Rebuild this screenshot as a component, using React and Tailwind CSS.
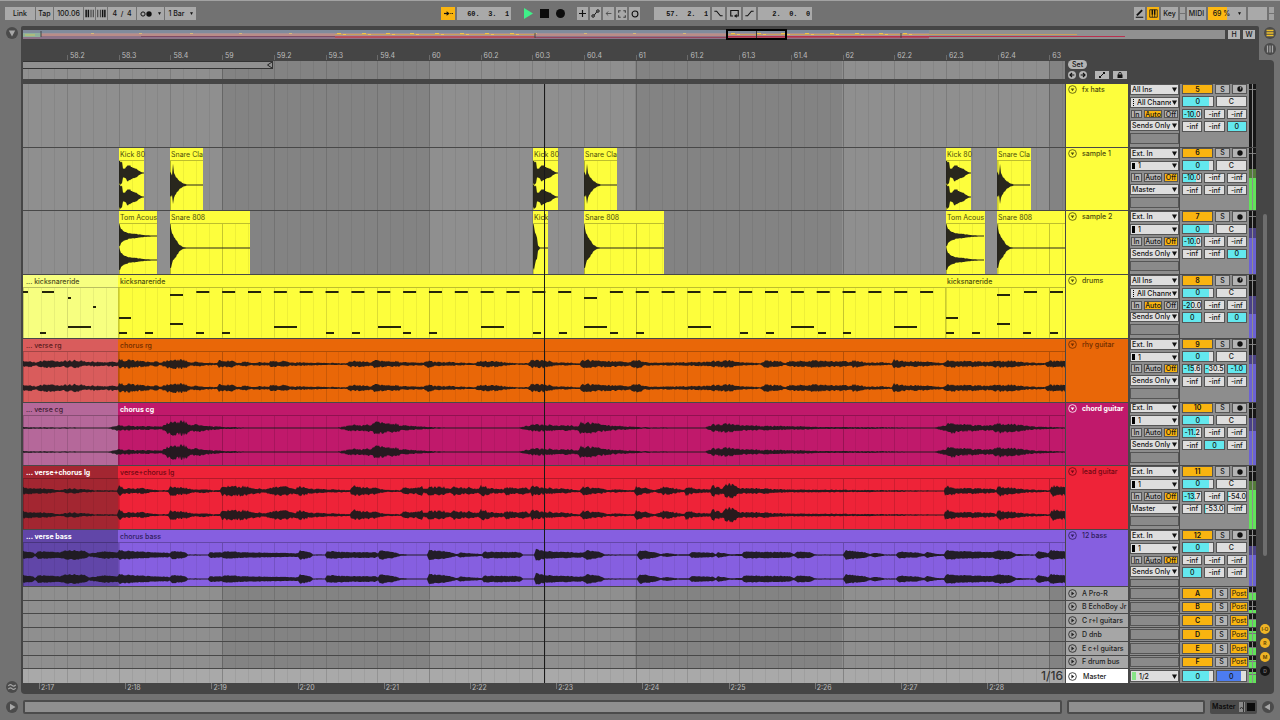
import { useState } from "react";
import clsx from "clsx";

const VIEW_START = 23;
const VIEW_WIDTH = 1042;
const BEAT = 51.7;
const FIRST_BEAT = 67;

const pct = (x) => `${((x - VIEW_START) / VIEW_WIDTH) * 100}%`;
const span = (from, to) => ({ left: pct(from), width: `${((to - from) / VIEW_WIDTH) * 100}%` });

const BEAT_LABELS = [
    "58.2", "58.3", "58.4", "59", "59.2", "59.3", "59.4", "60", "60.2", "60.3",
    "60.4", "61", "61.2", "61.3", "61.4", "62", "62.2", "62.3", "62.4", "63",
];
const TIME_LABELS = ["2:17", "2:18", "2:19", "2:20", "2:21", "2:22", "2:23", "2:24", "2:25", "2:26", "2:27", "2:28"];

// envelopes are [x, amplitude] pairs
const RHY = [23,3,30,3.5,36,2,42,4,55,4,62,3,70,4,78,4,88,2,95,3,105,2,112,3,118,2,119,5,135,4,145,3,150,2,157,3.5,160,1.5,166,4,173,5.5,185,4.5,190,2,198,2.5,208,1.5,217,1,219,4,233,3.5,236,1.5,240,1.5,245,3,252,1.5,260,2,269,1.5,271,4,280,2,283,3.5,290,2,300,2,325,1.2,347,1,350,3.5,363,3,370,2,375,4,398,3,402,2,424,1.5,427,4,435,2.5,452,2,460,1.5,475,1,479,3,495,3.5,503,2,515,1,528,1,531,4,543,4.5,555,2,580,1,582,5,600,3.5,622,3,630,2,633,4,640,4.5,645,2,660,1.5,690,2,705,2.5,715,3.5,730,4,738,2,760,1,765,4,780,3,785,1,790,3.5,808,3,813,4.5,835,3,840,3.5,850,2.5,854,4.5,862,3,866,1.5,880,2,892,1,893,5,905,3,920,3,943,1.2,946,4,960,3.5,990,2.5,996,4,1010,3.5,1025,2,1045,1,1048,3.5,1065,4];
const CHORD = [23,1,85,0.6,108,0.5,112,1.5,118,3,119,3,135,2,162,2,166,5,172,9,178,7,184,8,190,4,200,4,212,2,225,1.2,245,0.6,337,0.5,345,2,352,4,360,3,370,4,378,7,386,6,395,5,402,3,415,2,430,1,450,0.6,518,0.5,525,2,535,4,548,3.5,560,3,578,2.5,581,7,585,6,592,6,602,4,610,3,625,2,640,1,670,0.6,705,0.5,712,4,727,5,740,3,760,2.5,795,2,820,1.2,880,1,910,0.6,935,0.5,945,3.5,950,6,965,4,980,3,993,3,997,6,1003,5,1015,4,1025,3,1035,1.5,1065,0.8];
const LEAD = [23,4,40,3,50,2.5,60,1,70,3,82,2,95,1,117,0.8,119,6,125,3,135,2.5,142,3.5,148,2,160,1,168,1,170,6,180,4,187,3.5,195,1.5,205,2.5,212,1,220,1,222,6,235,5,242,5.5,248,5,256,3,265,2,273,4.5,285,5,296,3,299,6,310,3,325,2,340,1.5,350,1,352,6,365,4,372,4,385,1.5,400,1,403,3.5,413,3,422,5,424,2,429,4.5,443,5,450,2,455,5.5,463,3,468,4.5,478,2,481,6,490,3.5,503,2,507,5,515,3,523,4.5,530,2,532,5.5,545,3.5,560,3,580,1,583,5.5,592,3.5,602,3,608,1,615,2,630,1,634,1,636,5,648,3,655,1,663,4.5,675,3,684,1,686,5,695,2.5,710,2,712,6,718,5,722,3,727,8,735,7,738,3,755,3,765,3,775,2,800,1.5,830,1.5,860,1.2,890,1,940,0.6,944,0.6,945,6,955,3.5,975,3,993,2.5,996,1,998,6,1010,3.5,1025,2,1045,1,1050,1,1052,6,1065,5];
const BASS = [23,4,33,3,35,1,38,4,60,3,63,4,70,5,85,4,89,1.5,95,2.5,105,4,115,3,118,3,119,5,130,4,150,3,167,2.5,170,2,172,4.5,185,3,188,0.7,208,0.6,210,3,222,2.5,224,4,240,3,290,2,298,2,300,5,310,3,313,0.7,325,0.6,327,4,350,3,375,3,378,1.5,380,5,392,3.5,400,1,408,0.6,427,0.6,429,5,445,4,457,1,460,2.5,475,1.5,482,1,484,3.5,520,3,523,0.6,534,0.6,536,6,545,4,570,3,583,2.5,587,5,600,3,605,0.7,637,0.6,640,5,655,3,661,1,666,2,677,0.8,689,0.8,692,3,712,2.5,716,1,718,3,730,0.8,742,1,744,3.5,790,3,794,1,797,3.5,810,3,815,0.7,843,0.6,846,5,865,3,870,1,875,2.5,885,0.7,896,0.7,899,3.5,918,2.5,924,1,927,3,938,1,944,1,946,5,960,4,993,3,998,5,1010,4,1016,1,1035,0.6,1038,4,1048,2,1051,5,1065,4];

const at = (x, env) => env.map((v, i) => (i % 2 ? v : v + x));
const kick = (x) => at(x, [0, 12, 3, 12, 4, 5, 6, 5, 9, 9, 14, 6, 18, 4, 22, 1, 25, 0.4]);
const clap = (x) => at(x, [0, 13, 2, 11, 3, 22, 4, 14, 6, 9, 9, 5, 13, 2, 17, 0.5, 33, 0.4]);
const tom = (x) => at(x, [0, 12, 2, 8, 5, 5, 10, 3, 15, 2.5, 25, 1, 38, 0.4]);
const snare = (x, length) => at(x, [0, 24, 1, 20, 3, 14, 5, 11, 9, 4, 13, 1, 18, 0.4, length, 0.4]);

const STEREO = [25, 49];
const MONO = [37];

const YELLOW = "bg-[#fdfe3c] text-[#4c4c0c]";

const hit = (label, from, to) => ({ from, to, label, tone: YELLOW, small: true });

const TRACKS = [
    {
        name: "fx hats", number: "5", tone: YELLOW, input: "All Ins", channel: "All Channe", monitor: "Auto",
        output: "Sends Only", sends: ["-10.0", "-inf", "-inf", "-inf", "-inf", "0"], midi: true, clips: [], waves: [],
        meter: { level: 0, dim: 0 },
    },
    {
        name: "sample 1", number: "6", tone: YELLOW, input: "Ext. In", channel: "1", monitor: "Off",
        output: "Master", sends: ["-10.0", "-inf", "-inf", "-inf", "-inf", "-inf"],
        clips: [hit("Kick 80", 119, 144), hit("Snare Cla", 170, 203), hit("Kick 80", 533, 558), hit("Snare Cla", 584, 617), hit("Kick 80", 946, 971), hit("Snare Cla", 997, 1031)],
        waves: [119, 533, 946].map((x) => ({ env: kick(x), rows: STEREO })).concat([170, 584, 997].map((x) => ({ env: clap(x), rows: MONO }))),
        meter: { level: 52, dim: 66, green: true },
    },
    {
        name: "sample 2", number: "7", tone: YELLOW, input: "Ext. In", channel: "1", monitor: "Off",
        output: "Sends Only", sends: ["-10.0", "-inf", "-inf", "-inf", "-inf", "0"],
        clips: [hit("Tom Acous", 119, 157), hit("Snare 808", 170, 250), hit("Kick", 533, 548), hit("Snare 808", 584, 664), hit("Tom Acous", 946, 985), hit("Snare 808", 997, 1065)],
        waves: [
            { env: tom(119), rows: STEREO }, { env: tom(946), rows: STEREO },
            { env: at(533, [0, 24, 1, 22, 3, 14, 4, 12, 5, 3, 7, 0.5, 15, 0.4]), rows: MONO },
            { env: snare(170, 80), rows: MONO }, { env: snare(584, 80), rows: MONO }, { env: snare(997, 68), rows: MONO },
        ],
        meter: { level: 57, dim: 74 },
    },
    {
        name: "drums", number: "8", tone: YELLOW, input: "All Ins", channel: "All Channe", monitor: "Auto",
        output: "Sends Only", sends: ["-20.0", "-inf", "-inf", "0", "-inf", "0"], midi: true, notes: true, waves: [],
        clips: [
            { from: 23, to: 118, label: "... kicksnareride", tone: "bg-[#f7ff80] text-[#4c4c20]", cut: true },
            { from: 118, to: 945, label: "kicksnareride", tone: YELLOW },
            { from: 945, to: 1065, label: "kicksnareride", tone: YELLOW },
        ],
        meter: { level: 38, dim: 66 },
    },
    {
        name: "rhy guitar", number: "9", tone: "bg-[#e96708] text-[#6e2c00]", input: "Ext. In", channel: "1", monitor: "Off",
        output: "Sends Only", sends: ["-15.6", "-30.5", "-1.0", "-inf", "-inf", "-inf"], waves: [{ env: RHY, rows: STEREO, rough: true }],
        clips: [
            { from: 23, to: 118, label: "... verse rg", tone: "bg-[#d95c5c] text-[#5c1c1c]", cut: true },
            { from: 118, to: 1065, label: "chorus rg", tone: "bg-[#e96708] text-[#6e2c00]" },
        ],
        meter: { level: 60, dim: 74 },
    },
    {
        name: "chord guitar", number: "10", tone: "bg-[#c0196b] text-white", strong: true, input: "Ext. In", channel: "1", monitor: "Off",
        output: "Sends Only", sends: ["-11.2", "-inf", "-inf", "-inf", "0", "-inf"], waves: [{ env: CHORD, rows: STEREO, rough: true }],
        clips: [
            { from: 23, to: 118, label: "... verse cg", tone: "bg-[#b5689a] text-[#3c1c30]", cut: true },
            { from: 118, to: 1065, label: "chorus cg", tone: "bg-[#c0196b] text-white", strong: true },
        ],
        meter: { level: 55, dim: 76 },
    },
    {
        name: "lead guitar", number: "11", tone: "bg-[#ee2338] text-[#6e0812]", input: "Ext. In", channel: "1", monitor: "Off",
        output: "Master", sends: ["-13.7", "-inf", "-54.0", "-inf", "-53.0", "-inf"], waves: [{ env: LEAD, rows: STEREO, rough: true }],
        clips: [
            { from: 23, to: 118, label: "... verse+chorus lg", tone: "bg-[#a32631] text-white", cut: true, strong: true },
            { from: 118, to: 1065, label: "verse+chorus lg", tone: "bg-[#ee2338] text-[#6e0812]" },
        ],
        meter: { level: 62, dim: 76, green: true },
    },
    {
        name: "12 bass", number: "12", tone: "bg-[#865fe0] text-[#2e1c5c]", input: "Ext. In", channel: "1", monitor: "Off",
        output: "Sends Only", sends: ["-inf", "-inf", "-inf", "0", "-inf", "-inf"], waves: [{ env: BASS, rows: STEREO }],
        clips: [
            { from: 23, to: 118, label: "... verse bass", tone: "bg-[#6146a8] text-white", cut: true, strong: true },
            { from: 118, to: 1065, label: "chorus bass", tone: "bg-[#865fe0] text-[#2e1c5c]" },
        ],
        meter: { level: 55, dim: 72 },
    },
];

const RETURNS = [
    { id: "A", name: "A Pro-R", level: 60 },
    { id: "B", name: "B EchoBoy Jr", level: 25 },
    { id: "C", name: "C r+l guitars", level: 65 },
    { id: "D", name: "D dnb", level: 80 },
    { id: "E", name: "E c+l guitars", level: 60 },
    { id: "F", name: "F drum bus", level: 65 },
];

// drum notes: [x, y, width]
const hats = [];
for (let i = 0; i < 29; i++) {
    if (i !== 15) hats.push([196.3 + (i * BEAT) / 2, 16, 13]);
}
const NOTES = [
    ...hats, [23, 16, 5], [42, 16, 12], [68, 22, 3], [93, 31, 3],
    [1024, 16, 13], [1050, 16, 13], [170, 19, 13], [584, 22, 13], [997, 19, 13],
    [119, 42, 12], [946, 42, 12], [170, 48, 13], [997, 48, 13],
    ...[68, 274, 378, 481, 584, 688, 791, 894].map((x) => [x, 51, 23]),
    ...[119, 145, 196, 222, 326, 352, 403, 429, 533, 559, 610, 636, 740, 766, 818, 843, 946, 972, 1023, 1050].map((x) => [x, 57, 8]),
    [40, 57, 6],
];

function wavePath(env, center, rough) {
    let seed = 7;
    const random = () => {
        seed = (seed * 16807) % 2147483647;
        return seed / 2147483647;
    };
    const top = [];
    const bottom = [];
    const wobble = rough ? 0.5 : 0.25;
    let i = 0;
    for (let x = env[0]; x <= env[env.length - 2]; x++) {
        while (i + 4 < env.length && env[i + 2] < x) i += 2;
        const t = Math.min(1, (x - env[i]) / (env[i + 2] - env[i]));
        const amp = env[i + 1] + (env[i + 3] - env[i + 1]) * t;
        const up = Math.max(0.5, amp * (1.05 - wobble * random()));
        const down = Math.max(0.5, amp * (1.05 - wobble * random()));
        top.push(`${x - VIEW_START} ${(center - up).toFixed(1)}`);
        bottom.unshift(`${x - VIEW_START} ${(center + down).toFixed(1)}`);
    }
    return `M${top.join("L")}L${bottom.join("L")}Z`;
}

function GridLines() {
    const lines = [];
    for (let i = -3; i <= 80; i++) {
        const x = Math.round(FIRST_BEAT + (i * BEAT) / 4 - VIEW_START);
        if (x < 0 || x >= VIEW_WIDTH) continue;
        const beat = i % 4 === 0;
        const bar = (i - 12) % 16 === 0;
        lines.push(<rect key={i} x={x} width="1" height="10" fill="#000" opacity={bar ? 0.22 : beat ? 0.13 : 0.06} />);
    }
    return (
        <svg className="absolute inset-0 h-full w-full" viewBox="0 0 1042 10" preserveAspectRatio="none" aria-hidden="true">
            {lines}
        </svg>
    );
}

function BarShades() {
    return (
        <>
            <div className="absolute inset-y-0 bg-black/8" style={span(222, 429)} />
            <div className="absolute inset-y-0 bg-black/8" style={span(635, 842)} />
            <div className="absolute inset-y-0 bg-black/8" style={span(1049, 1065)} />
        </>
    );
}

function Clip({ clip }) {
    return (
        <div className={clsx("absolute inset-y-0", clip.tone)} style={span(clip.from, clip.to)}>
            <div className="h-full border-l border-black/20" />
        </div>
    );
}

function ClipHeader({ clip }) {
    return (
        <div
            className={clsx(
                "absolute top-0 h-[13px] border-b border-b-black/25 whitespace-nowrap leading-[13px]",
                clip.tone,
                clip.cut ? "pl-[3px]" : clip.small ? "pl-px" : "pl-[2px]",
                clip.strong ? "font-bold" : clip.small ? "font-normal" : "font-medium"
            )}
            style={span(clip.from, clip.to)}
        >
            {clip.label}
        </div>
    );
}

function Lane({ track }) {
    return (
        <div className="relative min-w-0 flex-1 overflow-hidden bg-[#8f8f8f]">
            <BarShades />
            {track.clips.map((clip) => <Clip key={clip.from} clip={clip} />)}
            <GridLines />
            <svg className="absolute inset-x-0 top-0 h-[63px] w-full" viewBox="0 0 1042 63" preserveAspectRatio="none" aria-hidden="true">
                {track.waves.map((wave) =>
                    wave.rows.map((row) => (
                        <path key={`${wave.env[0]}-${row}`} d={wavePath(wave.env, row, wave.rough)} fill="#1c1a1c" fillOpacity="0.94" />
                    ))
                )}
                {track.notes && NOTES.map(([x, y, w]) => <rect key={`${x}-${y}`} x={x - VIEW_START} y={y} width={w} height="2" fill="#25250a" />)}
            </svg>
            {track.clips.map((clip) => <ClipHeader key={clip.from} clip={clip} />)}
        </div>
    );
}

function Fold({ open }) {
    return (
        <svg viewBox="0 0 10 10" className="h-[9px] w-[9px] shrink-0" aria-hidden="true">
            <circle cx="5" cy="5" r="4.3" fill="none" stroke="currentColor" strokeWidth="0.9" />
            {open ? <path d="M3 3.8h4L5 7z" fill="currentColor" /> : <path d="M3.8 2.8v4.4L7 5z" fill="currentColor" />}
        </svg>
    );
}

function Picker({ label, value, icon }) {
    return (
        <div className="relative flex min-h-0 min-w-0 flex-1 basis-0 border border-[#555] bg-[#dedede]">
            {icon === "mono" && <span className="my-px ml-px w-[3px] shrink-0 bg-black" />}
            {icon === "midi" && <span className="my-px ml-[2px] w-px shrink-0 border-l border-dotted border-black" />}
            {icon === "stereo" && <span className="my-px ml-px w-[4px] shrink-0 bg-[#86e486]" />}
            <select
                aria-label={label}
                defaultValue={value}
                className={clsx("h-full min-h-0 w-full min-w-0 appearance-none bg-transparent leading-none font-medium outline-none", icon ? "pl-[3px]" : "pl-px")}
            >
                <option>{value}</option>
            </select>
            <span className="pointer-events-none absolute inset-y-0 right-0 flex w-[7px] items-center justify-center bg-[#dedede]">
                <svg viewBox="0 0 6 6" className="h-[5px] w-[5px]" aria-hidden="true">
                    <path d="M0 0.5h6L3 6z" fill="#111" />
                </svg>
            </span>
        </div>
    );
}

function fillFor(value) {
    const db = parseFloat(value);
    if (Number.isNaN(db)) return 0;
    if (db === 0) return 100;
    return Math.max(6, 100 + db * 2.6);
}

function Value({ label, value, fill, color = "#63e8ee" }) {
    const background = `linear-gradient(to right, ${color} ${fill}%, #dedede ${fill}%)`;
    return (
        <input
            aria-label={label}
            defaultValue={value}
            className="w-0 min-w-0 flex-1 border border-[#555] text-center leading-none font-medium outline-none"
            style={{ background }}
        />
    );
}

function Toggle({ on, className, children, ...rest }) {
    return (
        <button
            className={clsx("flex min-h-0 items-center justify-center overflow-hidden border border-[#555] leading-none", on ? "bg-[#f9b410]" : "bg-[#b4b4b4]", className)}
            aria-pressed={!!on}
            {...rest}
        >
            {children}
        </button>
    );
}

function Meter({ level, dim, green }) {
    return (
        <div className="flex w-[8px] shrink-0 justify-center gap-px bg-[#8d8d8d]">
            {[0, 1].map((i) => (
                <div key={i} className="relative w-[3px] bg-[#161616]">
                    <div className={clsx("absolute inset-x-0 bottom-0", green ? "bg-[#547c3a]" : "bg-[#4b4287]")} style={{ height: `${dim}%` }} />
                    <div className={clsx("absolute inset-x-0 bottom-0", green ? "bg-[#62e35a]" : "bg-[#6c62d4]")} style={{ height: `${level}%` }} />
                    <div className="absolute inset-x-0 top-[5px] h-px bg-[#777]" />
                </div>
            ))}
        </div>
    );
}

function Track({ track, short }) {
    const [monitor, setMonitor] = useState(track.monitor);
    const [active, setActive] = useState(true);

    return (
        <div className={clsx("flex min-h-0 basis-0 overflow-hidden border-b border-[#484848]", short ? "grow-57" : "grow-64")}>
            <Lane track={track} />
            <div className="flex w-[191px] shrink-0 bg-[#484848] pl-px">
                <div className={clsx("flex w-[62px] shrink-0 items-start gap-[5px] pl-[2px]", track.tone)}>
                    <button aria-label={`Fold ${track.name}`} className="mt-px"><Fold open /></button>
                    <span className={clsx("whitespace-nowrap leading-[11px]", track.strong ? "font-bold" : "font-medium")}>{track.name}</span>
                </div>
                <div className="ml-[2px] flex w-[49px] shrink-0 flex-col bg-[#8d8d8d]">
                    <div className="flex h-[61px] shrink-0 flex-col gap-[2px] pb-px">
                        <Picker label={`${track.name} input type`} value={track.input} />
                        <Picker label={`${track.name} input channel`} value={track.channel} icon={track.midi ? "midi" : "mono"} />
                        <div className="flex min-h-0 flex-1 gap-[2px] px-px font-medium">
                            {["In", "Auto", "Off"].map((mode) => (
                                <Toggle key={mode} on={monitor === mode} onClick={() => setMonitor(mode)} className={mode === "Auto" ? "w-[18px]" : mode === "In" ? "w-[11px]" : "w-[14px]"}>
                                    {mode}
                                </Toggle>
                            ))}
                        </div>
                        <Picker label={`${track.name} output`} value={track.output} />
                        <div className="min-h-0 flex-1 border border-[#555] bg-[#8a8a8a]" />
                    </div>
                </div>
                <div className="ml-px w-[68px] shrink-0 bg-[#8d8d8d] pl-[2px]">
                    <div className="flex h-[61px] flex-col gap-[2px] pb-px">
                        <div className="flex min-h-0 flex-1 gap-[2px]">
                            <Toggle on={active} onClick={() => setActive(!active)} className="w-[31px] font-semibold">{track.number}</Toggle>
                            <Toggle className="w-[15px] font-medium">S</Toggle>
                            <Toggle className="w-[15px]" aria-label={`Arm ${track.name}`}>
                                <svg viewBox="0 0 8 8" className="h-[6px] w-[6px]" aria-hidden="true">
                                    <circle cx="4" cy="4" r="3.6" fill="#111" />
                                    {track.midi && <path d="M4.6 1.4v3.4M4.6 1.6l1.6 1" stroke="#ccc" strokeWidth="0.9" fill="none" />}
                                </svg>
                            </Toggle>
                        </div>
                        <div className="flex min-h-0 flex-1 gap-[2px] pr-px">
                            <Value label={`${track.name} volume`} value="0" fill={85} />
                            <Value label={`${track.name} pan`} value="C" fill={0} />
                        </div>
                        {[0, 3].map((row) => (
                            <div key={row} className="flex min-h-0 flex-1 gap-[2px] pr-px">
                                {track.sends.slice(row, row + 3).map((send, i) => (
                                    <Value key={i} label={`${track.name} send ${row + i + 1}`} value={send} fill={fillFor(send)} />
                                ))}
                            </div>
                        ))}
                        <div className="min-h-0 flex-1" />
                    </div>
                </div>
                <Meter {...track.meter} />
            </div>
        </div>
    );
}

function ReturnTrack({ item }) {
    return (
        <div className="flex min-h-0 grow-13 basis-0 border-b border-[#484848]">
            <div className="relative min-w-0 flex-1 bg-[#8f8f8f]">
                <BarShades />
                <GridLines />
            </div>
            <div className="flex w-[191px] shrink-0 bg-[#484848] pl-px">
                <div className="flex w-[62px] shrink-0 items-center gap-[5px] bg-[#a6a6a6] pl-[2px] text-[#222]">
                    <button aria-label={`Unfold ${item.name}`}><Fold /></button>
                    <span className="whitespace-nowrap font-medium leading-none">{item.name}</span>
                </div>
                <div className="ml-[2px] flex w-[49px] shrink-0 bg-[#8d8d8d] py-px">
                    <div className="flex-1 border border-[#555] bg-[#8a8a8a]" />
                </div>
                <div className="ml-px flex w-[68px] shrink-0 gap-[2px] bg-[#8d8d8d] py-px pl-[2px]">
                    <Toggle on className="w-[31px] font-semibold">{item.id}</Toggle>
                    <Toggle className="w-[13px] font-medium">S</Toggle>
                    <Toggle on className="w-[18px]">Post</Toggle>
                </div>
                <Meter level={item.level} dim={item.level} green />
            </div>
        </div>
    );
}

function MasterTrack() {
    return (
        <div className="flex min-h-0 grow-14 basis-0">
            <div className="relative min-w-0 flex-1 bg-[#a9a9a9]">
                <GridLines />
                <span className="absolute right-[2px] bottom-0 text-[12px] leading-[14px] font-medium text-[#333]">1/16</span>
            </div>
            <div className="flex w-[191px] shrink-0 bg-[#484848] pl-px">
                <div className="flex w-[62px] shrink-0 items-center gap-[6px] bg-white pl-[2px] text-[#222]">
                    <button aria-label="Unfold Master"><Fold /></button>
                    <span className="font-medium leading-none">Master</span>
                </div>
                <div className="ml-[2px] flex w-[49px] shrink-0 bg-[#8d8d8d] py-px">
                    <Picker label="Master output" value="1/2" icon="stereo" />
                </div>
                <div className="ml-px flex w-[68px] shrink-0 gap-[2px] bg-[#8d8d8d] py-px pr-px pl-[2px]">
                    <Value label="Master volume" value="0" fill={85} />
                    <Value label="Cue volume" value="0" fill={82} color="#4c7cf0" />
                </div>
                <Meter level={78} dim={78} green />
            </div>
        </div>
    );
}

function BarButton({ className, tone = "bg-[#a9a9a9]", children, ...rest }) {
    return (
        <button className={clsx("flex h-[13px] shrink-0 items-center justify-center leading-none", tone, className)} {...rest}>
            {children}
        </button>
    );
}

function Glyph({ children, className = "h-[9px] w-[9px]" }) {
    return (
        <svg viewBox="0 0 12 12" className={className} fill="none" stroke="#111" strokeWidth="1.3" aria-hidden="true">
            {children}
        </svg>
    );
}

function Position({ label, value, className }) {
    return (
        <input
            aria-label={label}
            defaultValue={value}
            className={clsx("h-[13px] shrink-0 bg-[#a9a9a9] pr-[2px] text-right font-['Liberation_Mono',monospace] text-[7px] font-bold outline-none", className)}
        />
    );
}

function Caret() {
    return (
        <svg viewBox="0 0 6 6" className="h-[3px] w-[3px]" aria-hidden="true">
            <path d="M0 0.5h6L3 6z" fill="#111" />
        </svg>
    );
}

function MapLights() {
    return (
        <span className="flex w-[5px] flex-col gap-px">
            <i className="flex-1 bg-[#a2a2a2]" />
            <i className="flex-1 bg-[#a2a2a2]" />
        </span>
    );
}

function ControlBar() {
    const [playing, setPlaying] = useState(true);

    return (
        <header className="grid h-[26px] shrink-0 grid-cols-[17fr_auto_18fr] items-center border-t border-[#a2a2a2] pr-[6px] pl-[5px] font-medium">
            <div className="flex gap-px">
                <BarButton className="w-[30px]">Link</BarButton>
                <BarButton className="w-[17px]">Tap</BarButton>
                <input aria-label="Tempo" defaultValue="100.06" className="h-[13px] w-[29px] bg-[#a9a9a9] text-center outline-none" />
                <BarButton className="w-[11px]" aria-label="Nudge down">
                    <Glyph><path d="M1.5 1v10M4.5 1v10" strokeWidth="2" /><path d="M8 1v10M11 1v10" strokeWidth="1" /></Glyph>
                </BarButton>
                <BarButton className="w-[11px]" aria-label="Nudge up">
                    <Glyph><path d="M1 1v10M4.5 1v10" strokeWidth="1" /><path d="M7.500 1v10M10.500 1v10" strokeWidth="2" /></Glyph>
                </BarButton>
                <input aria-label="Time signature" defaultValue="4  /  4" className="h-[13px] w-[28px] bg-[#a9a9a9] text-center outline-none" />
                <BarButton className="w-[27px] gap-[6px]" aria-label="Metronome">
                    <svg viewBox="0 0 12 6" className="h-[6px] w-[12px]" aria-hidden="true">
                        <circle cx="3" cy="3" r="2.1" fill="none" stroke="#111" />
                        <circle cx="9" cy="3" r="2.7" fill="#111" />
                    </svg>
                    <Caret />
                </BarButton>
                <BarButton className="w-[31px] gap-[5px]">1 Bar <Caret /></BarButton>
            </div>

            <div className="flex items-center">
                <BarButton className="w-[14px]" tone="bg-[#f9b410]" aria-label="Follow">
                    <Glyph><path d="M0 6h6" strokeWidth="1.6" /><path d="M3.5 3l4 3-4 3z" fill="#111" stroke="none" /><path d="M8.5 6h1.4M10.8 6H12" /></Glyph>
                </BarButton>
                <Position label="Arrangement position" value="60.  3.  1" className="ml-[2px] w-[54px]" />
                <button aria-label="Play" aria-pressed={playing} onClick={() => setPlaying(!playing)} className="ml-[13px]">
                    <svg viewBox="0 0 9 11" className="h-[11px] w-[9px]" aria-hidden="true"><path d="M0 0l9 5.5L0 11z" fill="#3ff088" /></svg>
                </button>
                <button aria-label="Stop" onClick={() => setPlaying(false)} className="ml-[7px] h-[9px] w-[9px] bg-[#0c0c0c]" />
                <button aria-label="Record" className="ml-[7px] h-[9px] w-[9px] rounded-full bg-[#0c0c0c]" />
                <div className="ml-[12px] flex gap-[2px]">
                    <BarButton className="w-[11px]" aria-label="Overdub"><Glyph className="h-[7px] w-[7px]"><path d="M6 0v12M0 6h12" strokeWidth="2" /></Glyph></BarButton>
                    <BarButton className="w-[11px]" aria-label="Automation arm"><Glyph><path d="M4 8.5l4-5" /><circle cx="2.8" cy="9.3" r="1.7" /><circle cx="9.2" cy="2.7" r="1.7" /></Glyph></BarButton>
                    <BarButton className="w-[11px]" aria-label="Re-enable automation"><Glyph className="h-[7px] w-[7px] opacity-60"><path d="M11 6H2M5.5 2.5L2 6l3.5 3.5" strokeWidth="1.6" /></Glyph></BarButton>
                    <BarButton className="w-[11px]" aria-label="Capture"><Glyph className="h-[8px] w-[8px] opacity-70"><path d="M1 4V1h3M8 1h3v3M11 8v3H8M4 11H1V8" strokeWidth="1.6" /></Glyph></BarButton>
                    <BarButton className="w-[11px]" aria-label="Session record"><Glyph className="h-[8px] w-[8px]"><circle cx="6" cy="6" r="4.4" strokeWidth="1.6" /></Glyph></BarButton>
                </div>
                <Position label="Loop start" value="57.  2.  1" className="ml-[14px] w-[56px]" />
                <div className="ml-[2px] flex gap-[2px]">
                    <BarButton className="w-[13px]" aria-label="Punch in"><Glyph><path d="M0.5 3h3l5 6h3" strokeWidth="1.5" /></Glyph></BarButton>
                    <BarButton className="w-[14px]" aria-label="Loop"><Glyph><path d="M4 9.3H1V2h10v7.3H8" strokeWidth="1.5" /><path d="M9 6.8v5L5.2 9.3z" fill="#111" stroke="none" /></Glyph></BarButton>
                    <BarButton className="w-[13px]" aria-label="Punch out"><Glyph><path d="M0.5 9h3l5-6h3" strokeWidth="1.5" /></Glyph></BarButton>
                </div>
                <Position label="Loop length" value="2.  0.  0" className="ml-[2px] w-[54px]" />
            </div>

            <div className="flex justify-end gap-[2px]">
                <BarButton className="w-[11px]" aria-label="Draw mode"><Glyph><path d="M2.5 8.5L9.5 1.5" strokeWidth="2.6" /><path d="M1 11h10" strokeWidth="1.4" /></Glyph></BarButton>
                <BarButton className="w-[12px]" tone="bg-[#f9b410]" aria-label="Computer MIDI keyboard"><Glyph><path d="M1 1h10v10H1z" strokeWidth="1" /><path d="M4.4 7.5V11M7.6 7.5V11" strokeWidth="1" /><path d="M4.4 1v6.5M7.6 1v6.5" strokeWidth="2" /></Glyph></BarButton>
                <BarButton className="w-[17px]">Key</BarButton>
                <MapLights />
                <BarButton className="w-[19px]">MIDI</BarButton>
                <BarButton className="w-[38px] gap-[8px]" tone="bg-linear-to-r from-[#fdb813] from-50% to-[#a9a9a9] to-50%">69 % <Caret /></BarButton>
                <span className="w-[19px] bg-[#a9a9a9]" />
                <MapLights />
            </div>
        </header>
    );
}

function Overview() {
    const ticks = [91, 139, 190, 239, 289, 534, 584, 633, 683];
    const bursts = [337, 362, 386, 410, 435, 460, 485, 510, 731, 757, 781, 805, 830, 855, 879, 903];
    return (
        <div className="relative min-w-0 flex-1">
            <svg viewBox="0 0 1202 9" preserveAspectRatio="none" className="block h-[9px] w-full" aria-hidden="true">
                <rect width="1202" height="9" fill="#909090" />
                <rect width="906" height="3" fill="#808b9c" />
                <rect y="3" width="906" height="3" fill="#a89095" />
                <rect y="6" width="906" height="3" fill="#8d7388" />
                <rect y="3" width="18" height="4" fill="#8fb09c" />
                <path d="M2 5h10" stroke="#c8c860" />
                <rect x="18" y="4" width="294" height="2" fill="#b98c88" />
                <rect x="118" y="6" width="194" height="1" fill="#7d4a66" />
                <rect x="312" y="4" width="200" height="1" fill="#c9a05c" />
                <rect x="312" y="6" width="200" height="2" fill="#b5505e" />
                <rect x="512" y="4" width="192" height="2" fill="#b98c88" />
                <rect x="512" y="7" width="192" height="1" fill="#96455d" />
                <rect x="704" y="4" width="350" height="1" fill="#c9a05c" />
                <rect x="704" y="6" width="398" height="1" fill="#b8304f" />
                <rect x="704" y="7" width="202" height="1" fill="#a95060" />
                {ticks.map((x) => <rect key={x} x={x - 23} y="3" width="3" height="1" fill="#d8b878" />)}
                {bursts.map((x) => <path key={x} d={`M${x - 23} 3.5h4m2 1h3`} stroke="#f3c24a" />)}
                <path d="M18 1v6M512 3v5M878 3v5" stroke="#444" />
            </svg>
            <div className="absolute -top-px -bottom-px border-2 border-black" style={{ left: "58.5%", width: "5.1%" }}>
                <div className="mx-auto h-full w-px bg-[#333]" />
            </div>
        </div>
    );
}

function RoundButton({ label, children, className }) {
    return (
        <button aria-label={label} className={clsx("flex h-[12px] w-[12px] shrink-0 items-center justify-center rounded-full bg-[#4b4b4b]", className)}>
            <svg viewBox="0 0 12 12" className="h-full w-full" fill="none" stroke="#a8a8a8" aria-hidden="true">{children}</svg>
        </button>
    );
}

function BeatRuler() {
    return (
        <div className="relative h-[17px]">
            {BEAT_LABELS.map((label, i) => (
                <span key={label} className="absolute bottom-0 flex h-[9px] items-end pt-[4px]" style={{ left: pct(FIRST_BEAT + i * BEAT) }}>
                    <i className="h-[5px] w-px bg-[#6a6a6a]" />
                    <span className="pl-[2px] leading-[9px]">{label}</span>
                </span>
            ))}
        </div>
    );
}

function Locators() {
    return (
        <div className="w-[191px] shrink-0 pl-[3px]">
            <button className="flex h-[9px] items-center rounded-full bg-[#b4b4b4] px-[4px] font-medium leading-none text-[#111]">Set</button>
            <div className="mt-[2px] flex items-center">
                <button aria-label="Previous locator"><Glyph className="h-[8px] w-[8px]"><circle cx="6" cy="6" r="6" fill="#b4b4b4" stroke="none" /><path d="M9.5 6h-6M6 3L3 6l3 3" strokeWidth="1.8" /></Glyph></button>
                <button aria-label="Next locator" className="ml-[3px]"><Glyph className="h-[8px] w-[8px]"><circle cx="6" cy="6" r="6" fill="#b4b4b4" stroke="none" /><path d="M2.5 6h6M6 3l3 3-3 3" strokeWidth="1.8" /></Glyph></button>
                <button aria-label="Automation mode" className="ml-[8px] flex h-[8px] w-[14px] items-center justify-center bg-[#b4b4b4]"><Glyph className="h-[6px] w-[6px]"><path d="M2.5 9.5l7-7" strokeWidth="2" /><path d="M0 8h4v4H0zM8 0h4v4H8z" fill="#111" stroke="none" /></Glyph></button>
                <button aria-label="Lock envelopes" className="ml-[4px] flex h-[8px] w-[14px] items-center justify-center bg-[#b4b4b4]"><Glyph className="h-[6px] w-[6px]"><path d="M1 5h10v7H1z" fill="#111" stroke="none" /><path d="M3.5 6V3a2.5 2.5 0 015 0v3" strokeWidth="1.8" /></Glyph></button>
            </div>
        </div>
    );
}

function SideRail() {
    return (
        <div className="relative w-[18px] shrink-0">
            <div className="absolute top-[154px] bottom-[138px] left-[7px] w-[4px] rounded-full bg-[#6e6e6e]" />
            <div className="absolute bottom-[18px] left-[4px] flex flex-col gap-[4px] text-[5px] font-semibold text-[#5a3c00]">
                {["I·O", "R", "M"].map((name) => (
                    <button key={name} className="flex h-[10px] w-[10px] items-center justify-center rounded-full bg-[#efb426] leading-none">{name}</button>
                ))}
                <button className="flex h-[10px] w-[10px] items-center justify-center rounded-full bg-[#141414] leading-none text-[#777]">D</button>
            </div>
        </div>
    );
}

function StatusBar() {
    return (
        <footer className="flex h-[26px] shrink-0 items-center px-[6px]">
            <RoundButton label="Show clip view"><path d="M4 2.8v6.4L9.6 6z" fill="#a8a8a8" stroke="none" /></RoundButton>
            <div className="ml-[5px] h-[14px] flex-1 rounded-xs border-2 border-[#4b4b4b] bg-[#8f8f8f]" />
            <div className="ml-[5px] h-[14px] w-[138px] rounded-xs border-2 border-[#4b4b4b] bg-[#8f8f8f]" />
            <div className="ml-[5px] flex h-[14px] w-[47px] items-center justify-between rounded-xs bg-[#4b4b4b] px-[2px] font-semibold text-[#0c0c0c]">
                Master
                <svg viewBox="0 0 16 10" className="h-[10px] w-[16px]" aria-hidden="true">
                    <rect width="6" height="10" fill="#8a8a8a" />
                    <path d="M1 7l1.5-2L4 7M4.5 0v10" stroke="#333" fill="none" />
                    <rect x="8" y="1" width="8" height="8" fill="#0c0c0c" />
                </svg>
            </div>
            <RoundButton label="Hide view" className="ml-[5px]"><path d="M8 2.8v6.4L2.4 6z" fill="#a8a8a8" stroke="none" /></RoundButton>
        </footer>
    );
}

export default function App() {
    return (
        <div className="flex h-screen min-h-[640px] min-w-[900px] flex-col overflow-hidden bg-[#727272] font-['Inter','Liberation_Sans',sans-serif] text-[7px] text-[#141414]">
            <ControlBar />

            <div className="flex h-[34px] shrink-0">
                <div className="w-[21px] shrink-0 pt-px pl-[6px]">
                    <RoundButton label="Show browser"><path d="M2.8 3.4h6.4L6 9.4z" fill="#a8a8a8" stroke="none" /></RoundButton>
                </div>
                <div className="min-w-0 flex-1 rounded-t-xs bg-[#454545] pl-[2px]">
                    <div className="flex h-[17px] items-start gap-[3px] pt-[4px] pr-[4px]">
                        <Overview />
                        <button className="h-[9px] w-[12px] bg-[#b4b4b4] font-medium leading-none">H</button>
                        <button className="h-[9px] w-[12px] bg-[#b4b4b4] font-medium leading-none">W</button>
                    </div>
                    <div className="mr-[194px] text-[#bdbdbd]">
                        <BeatRuler />
                    </div>
                </div>
                <div className="flex w-[21px] shrink-0 flex-col items-center gap-[4px] pt-px">
                    <RoundButton label="Arrangement view"><path d="M2.5 3.5h7M2.5 6h7M2.5 8.5h7" stroke="#f2c32c" strokeWidth="1.4" /></RoundButton>
                    <RoundButton label="Session view"><path d="M3.5 2.5v7M6 2.5v7M8.5 2.5v7" strokeWidth="1.2" /></RoundButton>
                </div>
            </div>

            <main className="flex min-h-0 flex-1">
                <div className="flex w-[21px] shrink-0 flex-col justify-end pb-px pl-[6px]">
                    <RoundButton label="Groove pool"><path d="M2.3 5c1.5-2 2.7-1.5 3.7-.6s2.2 1.3 3.7-.6M2.3 8.200c1.5-2 2.7-1.5 3.7-.6s2.2 1.3 3.7-.6" strokeWidth="1.2" /></RoundButton>
                </div>
                <div className="mr-[6px] flex min-w-0 flex-1 rounded-tr-sm rounded-b-sm bg-[#454545] pl-[2px]">
                    <div className="flex min-w-0 flex-1 flex-col">
                        <div className="flex h-[24px] shrink-0">
                            <div className="relative mt-px mb-[5px] min-w-0 flex-1 bg-[#8f8f8f]">
                                <BarShades />
                                <GridLines />
                                <div className="absolute top-0 h-[8px] border border-l-0 border-[#333] bg-[#909090]" style={span(23, 273)}>
                                    <svg viewBox="0 0 5 6" className="absolute top-0 right-0 h-[6px] w-[5px]" aria-hidden="true"><path d="M5 0L0.5 3 5 6" fill="none" stroke="#222" /></svg>
                                </div>
                            </div>
                            <Locators />
                        </div>

                        <div className="relative flex min-h-0 flex-1 flex-col">
                            {TRACKS.map((track, i) => <Track key={track.number} track={track} short={i === TRACKS.length - 1} />)}
                            {RETURNS.map((item) => <ReturnTrack key={item.id} item={item} />)}
                            <MasterTrack />
                            {/* playhead */}
                            <div className="pointer-events-none absolute inset-y-0 right-[191px] left-0">
                                <div className="absolute inset-y-0 w-px bg-[#1a1a1a]" style={{ left: pct(544) }} />
                            </div>
                        </div>

                        <div className="relative mr-[191px] h-[11px] shrink-0 overflow-hidden text-[#bdbdbd]">
                            {TIME_LABELS.map((label, i) => (
                                <span key={label} className="absolute top-0 h-[6px] border-l border-[#777] pl-px leading-[9px]" style={{ left: pct(39 + i * 86.2) }}>
                                    {label}
                                </span>
                            ))}
                        </div>
                    </div>
                    <SideRail />
                </div>
            </main>

            <StatusBar />
        </div>
    );
}
